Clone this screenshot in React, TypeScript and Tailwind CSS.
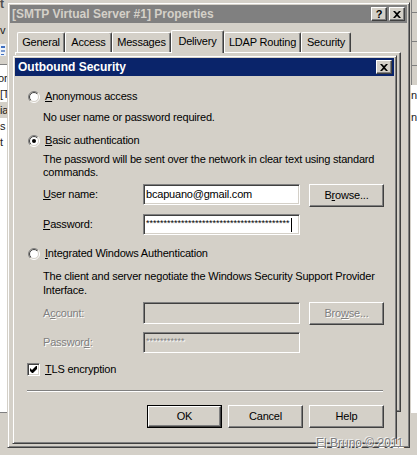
import React from "react";

const sunken =
  "border border-t-[#808080] border-l-[#808080] border-b-white border-r-white shadow-[inset_1px_1px_#404040,inset_-1px_-1px_#d4d0c8]";
const raised =
  "border border-t-white border-l-white border-b-[#404040] border-r-[#404040] shadow-[inset_-1px_-1px_#808080,inset_1px_1px_#d4d0c8]";
const disabledText = "text-[#808080] [text-shadow:1px_1px_0_#fff]";

function Radio({ checked }: { checked?: boolean }) {
  return (
    <svg width="12" height="12" viewBox="0 0 12 12" className="shrink-0">
      <defs>
        <linearGradient id="rgo" x1="0" y1="0" x2="1" y2="1">
          <stop offset="0.5" stopColor="#808080" />
          <stop offset="0.5" stopColor="#ffffff" />
        </linearGradient>
        <linearGradient id="rgi" x1="0" y1="0" x2="1" y2="1">
          <stop offset="0.5" stopColor="#404040" />
          <stop offset="0.5" stopColor="#d4d0c8" />
        </linearGradient>
      </defs>
      <circle cx="6" cy="6" r="5.5" fill="none" stroke="url(#rgo)" strokeWidth="1" />
      <circle cx="6" cy="6" r="4.5" fill="#fff" stroke="url(#rgi)" strokeWidth="1" />
      {checked && <circle cx="6" cy="6" r="2" fill="#000" />}
    </svg>
  );
}

function Checkbox() {
  return (
    <div className={`w-[13px] h-[13px] shrink-0 bg-white ${sunken} flex items-center justify-center`}>
      <svg width="7" height="7" viewBox="0 0 7 7">
        <path d="M0 2 L2 4 L6 0 H7 V3 L3 7 H2 L0 5 Z" fill="#000" />
      </svg>
    </div>
  );
}

function CaptionBtn({ children }: { children: React.ReactNode }) {
  return (
    <div className={`w-[16px] h-[14px] bg-[#d4d0c8] ${raised} flex items-center justify-center`}>
      {children}
    </div>
  );
}

function CloseGlyph() {
  return (
    <svg width="8" height="7" viewBox="0 0 8 7">
      <path d="M0 0 H2 L4 2 L6 0 H8 L5 3.5 L8 7 H6 L4 5 L2 7 H0 L3 3.5 Z" fill="#000" />
    </svg>
  );
}

function Tab({ label, w, selected }: { label: string; w: string; selected?: boolean }) {
  if (selected) {
    return (
      <div
        className={`${w} relative z-10 -mb-px h-[23px] bg-[#d4d0c8] border-t border-l border-r border-t-white border-l-white border-r-[#404040] shadow-[inset_-1px_0_#808080] rounded-tl-[2px] rounded-tr-[2px] flex justify-center pt-[4px] whitespace-nowrap`}
      >
        {label}
      </div>
    );
  }
  return (
    <div
      className={`${w} h-[20px] bg-[#d4d0c8] border-t border-l border-r border-t-white border-l-white border-r-[#404040] shadow-[inset_-1px_0_#808080] rounded-tl-[2px] rounded-tr-[2px] flex items-center justify-center whitespace-nowrap`}
    >
      {label}
    </div>
  );
}

function LeftStrip() {
  return (
    <div className="w-[7px] h-full shrink-0 flex flex-col overflow-hidden bg-[#d4d0c8]">
      <div className="h-[22px] font-bold text-[12px] leading-[9px] text-[#505050] tracking-normal">t</div>
      <div className="h-[14px] leading-[14px] pt-[1px] text-[#202020]">v</div>
      <div className="h-[28px] flex items-center">
        <svg width="7" height="14" viewBox="0 0 7 14">
          <rect x="0" y="1" width="6" height="12" fill="#eef2f8" />
          <rect x="1" y="3" width="4" height="2" fill="#3f6fc0" />
          <rect x="1" y="7" width="4" height="2" fill="#7a9ad0" />
          <rect x="1" y="11" width="3" height="1" fill="#3f6fc0" />
        </svg>
      </div>
      <div className="h-px bg-[#808080]" />
      <div className="h-[347px] bg-white flex flex-col pt-[5px] text-[#202020]">
        <div className="h-[16px] flex items-center -ml-[2px] whitespace-nowrap">or</div>
        <div className="h-[16px] flex items-center whitespace-nowrap">[T</div>
        <div className="h-[16px] flex items-center whitespace-nowrap bg-[#d4d0c8]">ia</div>
        <div className="h-[16px] flex items-center whitespace-nowrap">s</div>
        <div className="h-[16px] flex items-center whitespace-nowrap">t</div>
      </div>
      <div className="h-px bg-[#808080]" />
    </div>
  );
}

function RightStrip() {
  return (
    <div className="w-[7px] h-full shrink-0 flex bg-[#d4d0c8] overflow-hidden">
      <div className="w-[2px]" />
      <div className="w-px h-[413px] bg-[#808080]" />
      <div className="flex-1 flex flex-col">
        <div className="h-[12px]" />
        <div className="h-px bg-[#808080]" />
        <div className="h-[28px]" />
        <div className="h-px bg-[#808080]" />
        <div className="h-[23px]" />
        <div className="h-px bg-[#808080]" />
        <div className="h-[19px]" />
        <div className="h-[328px] bg-white flex flex-col text-[#202020] whitespace-nowrap">
          <div className="mt-[4px] h-[13px]">n</div>
          <div className="mt-[9px] h-[13px]">n</div>
        </div>
      </div>
    </div>
  );
}

function PropsWindow() {
  return (
    <div className="mt-[2px] w-[403px] h-[446px] shrink-0 bg-[#d4d0c8] border border-t-[#d4d0c8] border-l-[#d4d0c8] border-b-[#404040] border-r-[#404040] shadow-[inset_1px_1px_#fff,inset_-1px_-1px_#808080] p-[2px] flex flex-col">
      <div className="h-[18px] bg-[#808080] flex items-center justify-between pl-[2px] pr-[2px]">
        <span className="font-bold text-[12px] tracking-normal text-[#d4d0c8] whitespace-nowrap">
          [SMTP Virtual Server #1] Properties
        </span>
        <div className="flex gap-[2px]">
          <CaptionBtn>
            <span className="font-bold text-[11px] leading-[11px] tracking-normal">?</span>
          </CaptionBtn>
          <CaptionBtn>
            <CloseGlyph />
          </CaptionBtn>
        </div>
      </div>
      <div className="mt-[7px] h-[22px] flex items-end pl-[7px]">
        <Tab label="General" w="w-[48px]" />
        <Tab label="Access" w="w-[47px]" />
        <Tab label="Messages" w="w-[59px]" />
        <Tab label="Delivery" w="w-[53px]" selected />
        <Tab label="LDAP Routing" w="w-[77px]" />
        <Tab label="Security" w="w-[50px]" />
      </div>
      <div className="ml-[5px] w-[386px] h-[360px] border border-t-white border-l-white border-b-[#404040] border-r-[#404040] shadow-[inset_-1px_-1px_#808080]" />
    </div>
  );
}

function Dialog() {
  return (
    <div className="absolute left-[12px] top-[55px] w-[385px] h-[389px] bg-[#d4d0c8] border border-t-[#d4d0c8] border-l-[#d4d0c8] border-b-[#404040] border-r-[#404040] shadow-[inset_1px_1px_#fff,inset_-1px_-1px_#808080] p-[2px] flex flex-col">
      <div className="h-[18px] shrink-0 bg-[#0a246a] flex items-center justify-between pl-[3px] pr-[2px]">
        <span className="text-white font-bold text-[12px] tracking-normal">Outbound Security</span>
        <CaptionBtn>
          <CloseGlyph />
        </CaptionBtn>
      </div>

      <div className="mt-[14px] h-[13px] flex items-center pl-[13px] gap-[5px]">
        <Radio />
        <span>
          <span className="underline underline-offset-[1px]">A</span>nonymous access
        </span>
      </div>
      <div className="mt-[8px] pl-[28px]">No user name or password required.</div>

      <div className="mt-[10px] h-[13px] flex items-center pl-[13px] gap-[5px]">
        <Radio checked />
        <span>
          <span className="underline underline-offset-[1px]">B</span>asic authentication
        </span>
      </div>
      <div className="mt-[6px] pl-[28px]">
        The password will be sent over the network in clear text using standard
        <br />
        commands.
      </div>

      <div className="mt-[5px] h-[23px] flex items-start pl-[28px]">
        <div className="w-[100px] h-[21px] flex items-center">
          <span>
            <span className="underline underline-offset-[1px]">U</span>ser name:
          </span>
        </div>
        <div className={`w-[157px] h-[21px] bg-white ${sunken} flex items-center pl-[2px]`}>
          bcapuano@gmail.com
        </div>
        <div className={`ml-[9px] w-[75px] h-[23px] ${raised} flex items-center justify-center`}>
          <span>
            B<span className="underline underline-offset-[1px]">r</span>owse...
          </span>
        </div>
      </div>

      <div className="mt-[7px] h-[21px] flex items-start pl-[28px]">
        <div className="w-[100px] h-[21px] flex items-center">
          <span>
            <span className="underline underline-offset-[1px]">P</span>assword:
          </span>
        </div>
        <div className={`w-[157px] h-[21px] bg-white ${sunken} flex items-start pl-[2px] pt-[2px] overflow-hidden`}>
          <span className="text-[9px] leading-[12px] tracking-normal whitespace-nowrap">
            *****************************************
          </span>
          <span className="ml-[1px] mt-[1px] w-px h-[14px] bg-black shrink-0" />
        </div>
      </div>

      <div className="mt-[12px] h-[13px] flex items-center pl-[13px] gap-[5px]">
        <Radio />
        <span>
          <span className="underline underline-offset-[1px]">I</span>ntegrated Windows Authentication
        </span>
      </div>
      <div className="mt-[9px] pl-[28px] leading-[14px]">
        The client and server negotiate the Windows Security Support Provider
        <br />
        Interface.
      </div>

      <div className="mt-[5px] h-[23px] flex items-start pl-[28px]">
        <div className="w-[100px] h-[22px] flex items-center">
          <span className={disabledText}>
            A<span className="underline underline-offset-[1px]">c</span>count:
          </span>
        </div>
        <div className={`w-[157px] h-[22px] bg-[#d4d0c8] ${sunken}`} />
        <div className={`ml-[9px] w-[75px] h-[23px] ${raised} flex items-center justify-center`}>
          <span className={disabledText}>
            Bro<span className="underline underline-offset-[1px]">w</span>se...
          </span>
        </div>
      </div>

      <div className="mt-[7px] h-[21px] flex items-start pl-[28px]">
        <div className="w-[100px] h-[21px] flex items-center">
          <span className={disabledText}>
            Passwor<span className="underline underline-offset-[1px]">d</span>:
          </span>
        </div>
        <div className={`w-[157px] h-[21px] bg-[#d4d0c8] ${sunken} flex items-start pl-[2px] pt-[2px]`}>
          <span className={`text-[9px] leading-[12px] tracking-normal whitespace-nowrap ${disabledText}`}>
            ***********
          </span>
        </div>
      </div>

      <div className="mt-[10px] h-[13px] flex items-center pl-[12px] gap-[5px]">
        <Checkbox />
        <span>
          <span className="underline underline-offset-[1px]">T</span>LS encryption
        </span>
      </div>

      <div className="mt-[14px] ml-[12px] w-[356px] h-[2px] border-t border-t-[#808080] border-b border-b-white" />

      <div className="mt-[13px] flex pl-[132px] gap-[6px]">
        <div className="w-[75px] h-[23px] border border-black">
          <div className={`w-full h-full ${raised} flex items-center justify-center`}>OK</div>
        </div>
        <div className={`w-[75px] h-[23px] ${raised} flex items-center justify-center`}>Cancel</div>
        <div className={`w-[75px] h-[23px] ${raised} flex items-center justify-center`}>Help</div>
      </div>
    </div>
  );
}

export default function App() {
  return (
    <div className="relative w-[417px] h-[455px] overflow-hidden bg-[#d4d0c8] flex [font-family:'Liberation_Sans',Arial,sans-serif] text-[11px] leading-[13px] tracking-[-0.2px] text-black">
      <LeftStrip />
      <PropsWindow />
      <RightStrip />
      <Dialog />
      <div className="absolute left-[316px] top-[436px] text-[12px] leading-[14px] tracking-normal text-[#7c7c7c] whitespace-nowrap [text-shadow:1px_1px_0_#fff,-1px_-1px_0_#f0f0f0]">
        El Bruno © 2011
      </div>
    </div>
  );
}
